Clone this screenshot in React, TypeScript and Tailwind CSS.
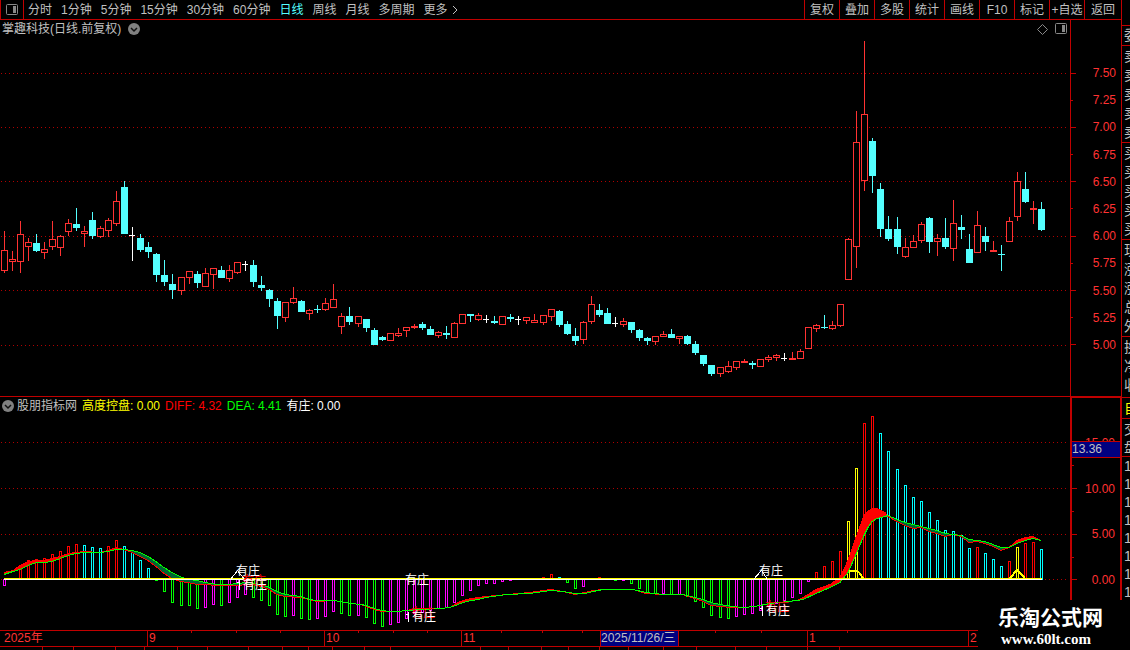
type Candle = [kind: "r" | "c" | "w", high: number, top: number, bottom: number, low: number];
type Bar = [index: number, kind: "r" | "c" | "g" | "m" | "y", end: number];

const periods = ["分时", "1分钟", "5分钟", "15分钟", "30分钟", "60分钟", "日线", "周线", "月线", "多周期", "更多"];
const tools = ["复权", "叠加", "多股", "统计", "画线", "F10", "标记", "+自选", "返回"];

const candles: Candle[] = [
  ["r", 231, 250, 270, 272], ["r", 251, 259, 261, 270], ["r", 221, 234, 261, 272], ["r", 238, 242, 246, 260], ["c", 234, 243, 250, 251],
  ["r", 242, 249, 252, 258], ["r", 221, 239, 246, 249], ["r", 235, 236, 247, 255], ["r", 219, 223, 231, 235], ["c", 208, 224, 227, 230],
  ["r", 226, 231, 233, 246], ["c", 212, 220, 235, 238], ["r", 226, 228, 236, 237], ["r", 218, 220, 230, 236], ["r", 191, 201, 223, 225],
  ["c", 181, 187, 233, 233], ["w", 227, 235, 235, 260], ["c", 234, 238, 249, 251], ["c", 242, 247, 251, 257], ["c", 253, 254, 274, 281],
  ["c", 260, 275, 281, 285], ["c", 274, 284, 289, 298], ["r", 277, 277, 290, 294], ["r", 271, 271, 277, 283], ["c", 271, 274, 282, 287],
  ["r", 268, 273, 286, 286], ["r", 268, 268, 274, 288], ["c", 266, 270, 277, 277], ["r", 265, 270, 278, 281], ["r", 262, 262, 272, 273],
  ["w", 261, 264, 264, 270], ["c", 260, 265, 281, 286], ["c", 276, 285, 287, 290], ["c", 289, 290, 298, 306], ["c", 298, 301, 315, 328],
  ["r", 302, 302, 317, 321], ["r", 287, 298, 302, 303], ["c", 300, 301, 311, 311], ["r", 309, 310, 313, 319], ["c", 305, 309, 309, 312],
  ["r", 298, 303, 309, 310], ["r", 284, 299, 307, 307], ["r", 313, 316, 326, 333], ["c", 307, 316, 321, 324], ["r", 316, 316, 323, 326],
  ["c", 319, 319, 327, 331], ["c", 328, 330, 344, 344], ["c", 336, 337, 339, 340], ["r", 333, 333, 340, 340], ["r", 328, 333, 335, 336],
  ["r", 327, 327, 330, 336], ["r", 324, 326, 327, 328], ["c", 322, 324, 327, 329], ["c", 326, 329, 334, 334], ["r", 331, 332, 335, 337],
  ["c", 326, 333, 334, 338], ["r", 322, 323, 337, 337], ["r", 314, 314, 323, 323], ["c", 314, 314, 315, 321], ["r", 313, 315, 319, 320],
  ["w", 315, 319, 319, 322], ["c", 316, 321, 322, 323], ["r", 316, 316, 324, 324], ["c", 314, 317, 318, 321], ["w", 316, 319, 319, 324],
  ["r", 317, 317, 320, 323], ["r", 314, 320, 322, 322], ["r", 315, 315, 322, 324], ["r", 309, 309, 316, 320], ["c", 310, 311, 324, 326],
  ["c", 321, 324, 333, 334], ["c", 328, 336, 340, 344], ["r", 321, 322, 339, 343], ["r", 296, 304, 321, 323], ["c", 304, 310, 314, 316],
  ["c", 308, 313, 323, 323], ["w", 317, 323, 323, 326], ["r", 318, 321, 324, 326], ["c", 322, 322, 329, 332], ["c", 329, 330, 337, 340],
  ["c", 337, 338, 340, 344], ["r", 336, 336, 341, 344], ["r", 331, 334, 336, 336], ["c", 329, 334, 337, 337], ["r", 336, 336, 338, 343],
  ["c", 335, 336, 343, 344], ["c", 341, 344, 352, 354], ["c", 355, 355, 363, 365], ["c", 365, 365, 373, 375], ["r", 367, 367, 373, 376],
  ["r", 361, 366, 371, 372], ["r", 361, 361, 367, 369], ["r", 359, 361, 362, 362], ["c", 361, 363, 364, 368], ["r", 359, 359, 366, 366],
  ["r", 355, 357, 359, 361], ["r", 354, 355, 357, 360], ["w", 353, 358, 358, 360], ["r", 352, 358, 359, 359], ["r", 349, 351, 358, 358],
  ["r", 327, 327, 348, 348], ["r", 324, 325, 328, 331], ["c", 315, 327, 327, 328], ["r", 321, 325, 328, 329], ["r", 304, 304, 325, 326],
  ["r", 238, 239, 279, 279], ["r", 111, 142, 246, 267], ["r", 41, 114, 180, 190], ["c", 138, 141, 175, 192], ["c", 183, 189, 228, 236],
  ["c", 216, 229, 238, 240], ["c", 217, 229, 246, 253], ["r", 238, 247, 256, 257], ["r", 235, 241, 247, 247], ["r", 222, 224, 240, 242],
  ["c", 217, 218, 241, 252], ["r", 234, 238, 241, 255], ["c", 218, 238, 246, 248], ["r", 200, 223, 248, 260], ["c", 215, 227, 229, 238],
  ["c", 234, 249, 262, 262], ["r", 211, 225, 252, 252], ["c", 227, 236, 241, 250], ["r", 241, 250, 251, 251], ["c", 245, 254, 254, 270],
  ["r", 217, 221, 241, 241], ["r", 172, 181, 216, 220], ["c", 172, 189, 201, 202], ["r", 201, 208, 209, 223], ["c", 202, 209, 229, 230],
];

const bars: Bar[] = [
  [0, "m", 585], [2, "r", 568], [3, "r", 560], [4, "r", 559], [5, "r", 558], [6, "r", 554], [7, "r", 551], [8, "r", 546], [9, "r", 544],
  [10, "c", 545], [11, "c", 547], [12, "c", 548], [13, "r", 546], [14, "r", 540], [15, "c", 546], [16, "c", 552], [17, "c", 560], [18, "c", 568],
  [19, "g", 580], [20, "g", 591], [21, "g", 602], [22, "g", 605], [23, "g", 605], [24, "g", 608], [25, "m", 607], [26, "m", 604], [27, "g", 605],
  [28, "m", 602], [29, "m", 597], [30, "m", 594], [31, "g", 597], [32, "g", 600], [33, "g", 605], [34, "g", 614], [35, "g", 616], [36, "m", 615],
  [37, "g", 618], [38, "g", 619], [39, "m", 618], [40, "m", 616], [41, "m", 611], [42, "g", 613], [43, "g", 615], [44, "m", 615], [45, "g", 617],
  [46, "g", 623], [47, "g", 626], [48, "m", 624], [49, "m", 622], [50, "m", 618], [51, "m", 613], [52, "m", 612], [53, "m", 610], [54, "m", 608],
  [55, "m", 607], [56, "m", 602], [57, "m", 595], [58, "m", 590], [59, "m", 585], [60, "m", 583], [61, "m", 583], [62, "m", 581], [63, "m", 580],
  [67, "r", 577], [68, "r", 574], [69, "c", 577], [70, "g", 582], [71, "g", 588], [72, "m", 586], [74, "r", 577], [76, "g", 580], [77, "m", 580],
  [78, "g", 583], [79, "g", 588], [80, "g", 593], [81, "g", 593], [82, "m", 593], [83, "g", 594], [84, "m", 594], [85, "g", 596], [86, "g", 601],
  [87, "g", 607], [88, "g", 615], [89, "g", 617], [90, "g", 618], [91, "m", 616], [92, "m", 614], [93, "m", 613], [94, "m", 610], [95, "m", 606],
  [96, "m", 603], [97, "m", 600], [98, "m", 597], [99, "m", 593], [100, "m", 581], [101, "r", 572], [102, "r", 566], [103, "r", 561], [104, "r", 551],
  [105, "y", 521], [106, "y", 468], [107, "r", 423], [108, "r", 416], [109, "c", 433], [110, "c", 451], [111, "c", 469], [112, "c", 485],
  [113, "c", 497], [114, "c", 501], [115, "c", 512], [116, "c", 520], [117, "c", 530], [118, "c", 531], [119, "c", 535], [120, "c", 548],
  [121, "r", 547], [122, "c", 553], [123, "c", 559], [124, "c", 566], [125, "r", 561], [126, "y", 547], [127, "r", 543], [128, "r", 542], [129, "c", 549],
];

// x, DEA, DIFF
const trend = [
  [4, 574, 572], [13, 571, 570], [20, 569, 565], [28, 565, 561], [36, 562, 560], [44, 562, 560], [52, 561, 558], [60, 558, 556], [68, 555, 553],
  [76, 553, 552], [84, 552, 551], [100, 552, 552], [108, 551, 550], [116, 549, 547], [124, 549, 549], [132, 550, 552], [140, 552, 556],
  [148, 556, 560], [156, 561, 566], [164, 567, 573], [172, 572, 578], [180, 576, 581], [188, 579, 582], [197, 580, 584], [205, 582, 584],
  [217, 584, 585], [230, 584, 585], [237, 583, 585], [247, 582, 584], [253, 583, 584], [261, 584, 586], [269, 587, 589], [277, 591, 594],
  [285, 594, 596], [301, 596, 597], [309, 599, 599], [317, 600, 601], [333, 600, 600], [341, 601, 601], [350, 603, 603], [361, 604, 604],
  [366, 605, 606], [374, 608, 609], [382, 610, 611], [390, 611, 611], [398, 611, 611], [406, 610, 610], [420, 609, 608], [440, 608, 608],
  [450, 607, 607], [458, 604, 602], [466, 601, 599], [478, 599, 597], [486, 597, 596], [507, 594, 594], [530, 593, 592], [543, 591, 590],
  [551, 590, 589], [563, 591, 591], [575, 593, 594], [585, 593, 592], [593, 591, 590], [603, 589, 589], [633, 589, 589], [646, 592, 593],
  [663, 594, 594], [683, 594, 594], [695, 597, 598], [703, 599, 601], [711, 602, 605], [720, 604, 606], [732, 606, 607], [743, 607, 607],
  [755, 606, 606], [770, 603, 603], [797, 600, 600], [803, 599, 597], [816, 593, 589], [830, 587, 584], [840, 582, 577], [848, 572, 560],
  [856, 554, 537], [864, 535, 515], [868, 527, 511], [872, 521, 508], [877, 518, 508], [885, 516, 512], [888, 515, 516], [897, 519, 521],
  [905, 522, 525], [913, 524, 528], [921, 526, 527], [929, 528, 531], [937, 530, 533], [945, 533, 536], [953, 534, 534], [961, 535, 536],
  [969, 539, 542], [977, 540, 541], [985, 541, 543], [993, 544, 546], [1001, 547, 550], [1009, 547, 547], [1017, 543, 540], [1025, 540, 537],
  [1033, 538, 536], [1041, 540, 540],
];

const priceTicks = ["7.50", "7.25", "7.00", "6.75", "6.50", "6.25", "6.00", "5.75", "5.50", "5.25", "5.00"];
const indicatorTicks = ["15.00", "", "10.00", "", "5.00", "", "0.00"];

const dateCells = [
  { label: "2025年", width: 147 },
  { label: "9", width: 177 },
  { label: "10", width: 137 },
  { label: "11", width: 139 },
  { label: "2025/11/26/三", width: 78 },
  { label: "", width: 129 },
  { label: "1", width: 161 },
  { label: "2", width: 153 },
];
const dateTicks = [147, 44, 45, 44, 44, 34, 35, 34, 34, 40, 41, 40, 18, 78, 37, 46, 46, 40, 121, 153];
const stripCells = [43, 31, 42, 29, 33, 30, 41, 34, 26, 24, 32, 26, 90, 28, 33, 27, 31, 29, 35, 33, 39, 31, 41, 32, 281];

const barColors = { r: "#ff0000", c: "#00ffff", g: "#00ff00", m: "#ff00ff", y: "#ffff00" };

const slotX = (i: number) => Math.floor(4.035 + 8.0448 * i);
const share = (width: number) => ({ width: `${(width / 1121) * 100}%` });

function PanelIcon() {
  return (
    <svg width="13" height="12" viewBox="0 0 13 12" aria-hidden="true">
      <rect x="0.5" y="0.5" width="11" height="10" rx="1" fill="none" stroke="#888888" />
      <rect x="7" y="2" width="3" height="7" fill="#888888" />
    </svg>
  );
}

function ExpandIcon() {
  return (
    <svg width="12" height="12" viewBox="0 0 12 12" aria-hidden="true">
      <circle cx="6" cy="6" r="6" fill="#808080" />
      <path d="M3 5l3 3 3-3" fill="none" stroke="#101010" strokeWidth="1.5" />
    </svg>
  );
}

function GridLine({ y }: { y: number }) {
  return <line x1="1" x2="1068" y1={y + 0.5} y2={y + 0.5} stroke="#b00000" strokeDasharray="1 3" />;
}

function CandleShape({ x, candle }: { x: number; candle: Candle }) {
  const [kind, high, top, bottom, low] = candle;
  const color = kind === "r" ? "#ff3232" : kind === "c" ? "#54ffff" : "#ffffff";
  return (
    <g>
      <rect x={x} y={high} width="1" height={low - high + 1} fill={color} />
      {kind === "r" ? (
        <rect x={x - 2.5} y={top + 0.5} width="6" height={bottom - top} fill="#000000" stroke={color} />
      ) : (
        <rect x={x - 3} y={top} width={kind === "w" ? 6 : 7} height={bottom - top + 1} fill={color} />
      )}
    </g>
  );
}

function PriceChart() {
  return (
    <svg className="block h-[358px] w-full" viewBox="0 38 1070 358" preserveAspectRatio="none" shapeRendering="crispEdges" role="img" aria-label="日线">
      {[73, 127, 181, 236, 290, 345].map((y) => <GridLine key={y} y={y} />)}
      {candles.map((candle, i) => <CandleShape key={i} x={slotX(i)} candle={candle} />)}
    </svg>
  );
}

function SignalNote({ x, y }: { x: number; y: number }) {
  return (
    <g fontSize="12">
      <text x={x + 4} y={y - 4} fill="#ff0000">有庄</text>
      <path d={`M${x + 1.5} ${y + 1}v-10M${x - 1} ${y - 6.5}h2`} stroke="#ffffff" />
      <text x={x + 5} y={y} fill="#ffffff">有庄</text>
    </g>
  );
}

function IndicatorChart() {
  return (
    <svg className="block h-[216px] w-full" viewBox="0 414 1070 216" preserveAspectRatio="none" shapeRendering="crispEdges" role="img" aria-label="高度控盘">
      {[442, 488, 534, 579].map((y) => <GridLine key={y} y={y} />)}
      {bars.map(([i, kind, end]) => {
        const top = Math.min(end, 579);
        return (
          <rect key={i} x={slotX(i) - 0.5} y={top + 0.5} width="2" height={Math.max(end, 579) - top} fill="#000000" stroke={barColors[kind]} />
        );
      })}
      {trend.slice(1).map(([x, dea, diff], i) => {
        const [px, pDea, pDiff] = trend[i];
        return (
          <polygon
            key={x}
            points={`${px},${pDea} ${x},${dea} ${x},${diff + 1} ${px},${pDiff + 1}`}
            fill={pDiff + diff < pDea + dea ? "#ff0000" : "#006633"}
          />
        );
      })}
      <polyline points={trend.map(([x, , diff]) => `${x},${diff + 0.5}`).join(" ")} fill="none" stroke="#ff0000" />
      <polyline points={trend.map(([x, dea]) => `${x},${dea + 0.5}`).join(" ")} fill="none" stroke="#00ff00" />
      <rect x="4" y="578" width="1038" height="1" fill="#ffff00" />
      <rect x="4" y="579" width="1038" height="1" fill="#ffffff" />
      <path d="M850 570.5h7l3 3 3 5M1010 578l7-8 8 8" fill="none" stroke="#ffff00" strokeWidth="2" />
      <path d="M230.5 579.5l7-9 7 9M753.5 579.5l8-9 6 9" fill="none" stroke="#ffffff" />
      <g fontSize="12" fill="#ffffff">
        <text x="236" y="575">有庄</text>
        <text x="405" y="584">有庄</text>
        <text x="759" y="575">有庄</text>
      </g>
      <SignalNote x={238} y={589} />
      <SignalNote x={407} y={621} />
      <SignalNote x={761} y={615} />
    </svg>
  );
}

function AxisRow({ label, major }: { label: string; major: boolean }) {
  return (
    <div className="flex h-4 items-center justify-between">
      <span className={major ? "h-px w-[5px] bg-[#c00000]" : "h-px w-[2px] bg-[#c00000]"} />
      <span className="pr-[5px]">{label}</span>
    </div>
  );
}

function QuoteGroup({ items, className }: { items: string; className: string }) {
  return (
    <div className={`border-b border-[#c00000] pl-[2px] text-sm ${className}`}>
      {[...items].map((item, i) => <p key={i}>{item}</p>)}
    </div>
  );
}

export default function App() {
  return (
    <div className="relative flex h-screen overflow-hidden bg-black font-['Liberation_Sans','Noto_Sans_CJK_SC',sans-serif] text-xs leading-4 text-[#c0c0c0]">
      <main className="flex min-w-0 flex-1 flex-col">
        <header className="flex h-5 shrink-0 items-stretch justify-between border-b border-[#c00000] whitespace-nowrap">
          <nav className="flex items-center gap-[9px]">
            <button className="-mr-[5px] flex h-full w-6 items-center justify-center border-x border-[#c00000]" aria-label="侧栏">
              <PanelIcon />
            </button>
            {periods.map((period) => (
              <button key={period} className={period === "日线" ? "text-[#54ffff]" : "flex items-center"}>
                {period}
                {period === "更多" && (
                  <svg className="ml-1" width="6" height="10" viewBox="0 0 6 10" aria-hidden="true">
                    <path d="M1 1l4 4-4 4" fill="none" stroke="#c0c0c0" />
                  </svg>
                )}
              </button>
            ))}
          </nav>
          <div className="flex">
            {tools.map((tool) => (
              <button key={tool} className="w-[35px] border-l border-[#c00000] text-center last:w-[37px]">{tool}</button>
            ))}
          </div>
        </header>

        <section className="flex">
          <div className="min-w-0 flex-1">
            <div className="flex h-[18px] items-center justify-between pr-[2px] pl-[2px]">
              <div className="flex items-center gap-[7px]">
                <h1>掌趣科技(日线.前复权)</h1>
                <button aria-label="展开"><ExpandIcon /></button>
              </div>
              <div className="flex items-center gap-[7px]">
                <svg width="11" height="11" viewBox="0 0 11 11" aria-hidden="true">
                  <path d="M5.5 0.5l5 5-5 5-5-5z" fill="none" stroke="#888888" />
                </svg>
                <PanelIcon />
              </div>
            </div>
            <PriceChart />
          </div>
          <div className="w-[51px] border-l border-[#c00000] pt-[45px] text-[#ff3232]">
            <div className="flex h-72 flex-col justify-between">
              {priceTicks.map((tick, i) => <AxisRow key={tick} label={tick} major={i % 2 === 0} />)}
            </div>
          </div>
        </section>

        <section className="flex">
          <div className="min-w-0 flex-1 border-t border-[#c00000]">
            <div className="flex h-[17px] items-center gap-[5px] pl-[2px] whitespace-nowrap">
              <h2 className="flex items-center gap-[3px]">
                <button aria-label="展开指标"><ExpandIcon /></button>
                股朋指标网
              </h2>
              <span className="text-[#ffff00]">高度控盘: 0.00</span>
              <span className="text-[#ff0000]">DIFF: 4.32</span>
              <span className="text-[#00ff00]">DEA: 4.41</span>
              <span className="text-white">有庄: 0.00</span>
            </div>
            <IndicatorChart />
          </div>
          <div className="relative w-[51px] border-t-2 border-r border-l-2 border-[#c00000] pt-[37px] text-[#ff3232]">
            <div className="flex h-[153px] flex-col justify-between">
              {indicatorTicks.map((tick, i) => <AxisRow key={i} label={tick} major={i % 2 === 0} />)}
            </div>
            <span className="absolute inset-x-0 top-[43px] h-[17px] border-y border-[#c00000] bg-[#000080] leading-[15px] text-[#c0c0c0]">13.36</span>
          </div>
        </section>

        <footer>
          <div className="border-y border-[#c00000] text-[#ff3232]">
            <div className="flex h-[2px]">
              {dateTicks.map((width, i) => (
                <span key={i} className="border-l border-[#c00000] first:border-l-0" style={share(width)} />
              ))}
            </div>
            <div className="-mt-[2px] flex h-[15px] leading-[15px] whitespace-nowrap">
              {dateCells.map(({ label, width }, i) => (
                <span
                  key={i}
                  className={
                    i === 0
                      ? "min-w-0 pl-1"
                      : i === 4
                        ? "min-w-0 border-l border-[#c00000] bg-[#000080] text-[#c0c0c0]"
                        : "min-w-0 border-l border-[#c00000] pl-px"
                  }
                  style={share(width)}
                >
                  {label}
                </span>
              ))}
            </div>
          </div>
          <div className="flex h-[3px] overflow-hidden">
            {stripCells.map((width, i) => (
              <span key={i} className="border-r border-[#c00000]" style={share(width)} />
            ))}
          </div>
        </footer>
      </main>

      <aside className="w-[9px] shrink-0 overflow-hidden border-l border-[#c00000]">
        <QuoteGroup items="" className="h-[26px]" />
        <QuoteGroup items="委" className="leading-[19px]" />
        <QuoteGroup items="卖卖卖卖卖" className="pt-px leading-[19px]" />
        <QuoteGroup items="买买买买买" className="pt-px leading-[19px]" />
        <QuoteGroup items="现涨涨总外" className="pt-px leading-[19px]" />
        <QuoteGroup items="换净收" className="pt-px pb-[2px] leading-[19px]" />
        <QuoteGroup items="自" className="leading-5 text-[#ffff00]" />
        <QuoteGroup items="交盘" className="pt-px leading-[18px]" />
        <QuoteGroup items="11111111" className="leading-[18px]" />
      </aside>

      <div className="absolute right-0 bottom-0 h-[50px] w-[152px] bg-black pt-[6px] pl-5 text-white">
        <p className="text-[21px] leading-6 font-bold">乐淘公式网</p>
        <p className="pl-[3px] font-['Liberation_Serif',serif] text-[15px] leading-[18px] font-bold">www.60lt.com</p>
      </div>
    </div>
  );
}
